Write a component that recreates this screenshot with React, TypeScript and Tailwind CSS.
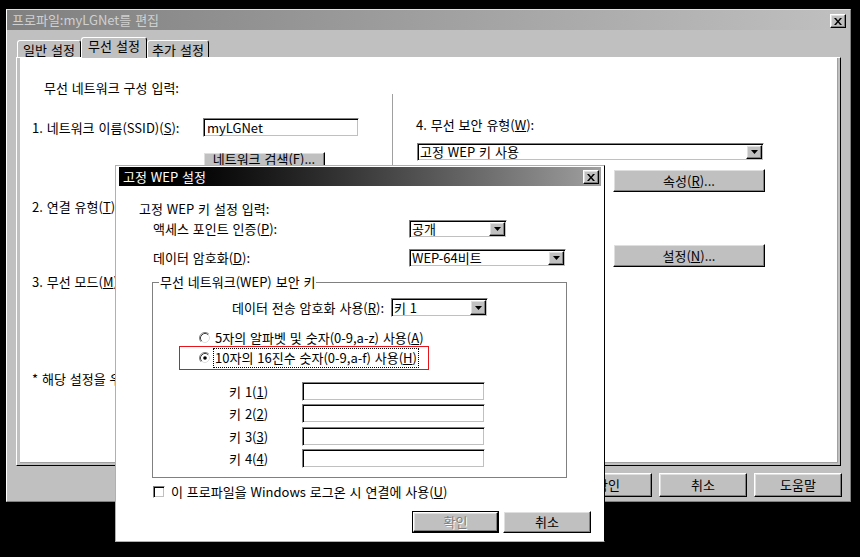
import React from 'react'

// win98-ish bevels
const raised =
  'bg-[#c0c0c0] border border-t-white border-l-white border-r-black border-b-black shadow-[inset_-1px_-1px_0_#808080,inset_1px_1px_0_#dfdfdf]'
const sunken =
  'bg-white border border-t-[#808080] border-l-[#808080] border-r-white border-b-white shadow-[inset_1px_1px_0_#000,inset_-1px_-1px_0_#c0c0c0]'

const U = ({ children }: { children: React.ReactNode }) => <span className="underline underline-offset-[1px]">{children}</span>

const Btn = ({ className = '', children }: { className?: string; children: React.ReactNode }) => (
  <div className={`${raised} flex items-center justify-center leading-[14px] ${className}`}>{children}</div>
)

const CloseBtn = ({ className = '' }: { className?: string }) => (
  <div className={`${raised} w-[16px] h-[14px] flex items-center justify-center ${className}`}>
    <svg width="8" height="7" viewBox="0 0 8 7">
      <path d="M0 0h2l2 2.5L6 0h2L5 3.5 8 7H6L4 4.5 2 7H0l3-3.5z" fill="#000" />
    </svg>
  </div>
)

const Select = ({ value, className = '' }: { value: string; className?: string }) => (
  <div className={`${sunken} flex items-stretch p-[1px] ${className}`}>
    <span className="flex-1 pl-[1px] leading-[14px] self-center">{value}</span>
    <div className={`${raised} w-[16px] flex items-center justify-center`}>
      <svg width="7" height="4" viewBox="0 0 7 4">
        <path d="M0 0h7L3.5 4z" fill="#000" />
      </svg>
    </div>
  </div>
)

const Radio = ({ checked = false }: { checked?: boolean }) => (
  <svg width="12" height="12" viewBox="0 0 12 12" className="shrink-0">
    <circle cx="6" cy="6" r="5" fill="#fff" />
    <path d="M9.89 2.11A5.5 5.5 0 0 0 2.11 9.89" stroke="#808080" fill="none" />
    <path d="M9.89 2.11A5.5 5.5 0 0 1 2.11 9.89" stroke="#fff" fill="none" />
    <path d="M9.18 2.82A4.5 4.5 0 0 0 2.82 9.18" stroke="#404040" fill="none" />
    <path d="M9.18 2.82A4.5 4.5 0 0 1 2.82 9.18" stroke="#dfdfdf" fill="none" />
    {checked && <circle cx="6" cy="6" r="1.8" fill="#000" />}
  </svg>
)

const Tab = ({ label, selected = false, className = '' }: { label: string; selected?: boolean; className?: string }) => (
  <div
    className={`bg-[#c0c0c0] border-t border-l border-r border-t-white border-l-white border-r-black rounded-t-[3px] flex justify-center leading-[14px] ${
      selected ? 'h-[21px] -mb-px relative z-10 pt-[1px]' : 'h-[17px] pt-[2px]'
    } ${className}`}
  >
    {label}
  </div>
)

const KeyRow = ({ n, className = '' }: { n: number; className?: string }) => (
  <div className={`flex items-center h-[19px] pl-[76px] ${className}`}>
    <div className="w-[73px] leading-[14px]">
      키 {n}(<U>{n}</U>)
    </div>
    <div className={`${sunken} w-[183px] h-[19px]`} />
  </div>
)

export default function App() {
  return (
    <div className="relative w-[860px] h-[557px] bg-black overflow-hidden whitespace-nowrap text-[13px] leading-[14px] [word-spacing:1px] text-black font-['Noto_Sans_CJK_KR',sans-serif]">
      {/* main window */}
      <div className="absolute left-[6px] top-[9px] w-[845px] h-[493px] bg-[#c0c0c0] border border-t-[#dfdfdf] border-l-white border-r-[#808080] border-b-[#808080] flex flex-col">
        <div className="h-[20px] flex justify-between bg-linear-to-r from-[#808080] to-[#c0c0c0] pl-[5px] pr-[4px]">
          <span className="self-center text-[#d0d0d0]">프로파일:myLGNet를 편집</span>
          <CloseBtn className="self-end mb-[2px]" />
        </div>

        <div className="flex items-end h-[20px] mt-[7px] pl-[10px]">
          <Tab label="일반 설정" className="w-[64px]" />
          <Tab label="무선 설정" selected className="w-[66px]" />
          <Tab label="추가 설정" className="w-[62px]" />
        </div>

        <div className="ml-[9px] w-[825px] h-[409px] border border-t-white border-l-white border-r-black border-b-black bg-[#c0c0c0] pl-[3px] pr-[2px] pb-[2px] flex">
          <div className="flex-1 bg-white border-r border-b border-r-[#a0a0a0] border-b-[#a0a0a0] flex">
            <div className="w-[372px] pl-[12px] pt-[23px]">
              <div className="ml-[12px]">무선 네트워크 구성 입력:</div>
              <div className="flex items-center mt-[23px] h-[19px]">
                <div className="w-[171px]">
                  1. 네트워크 이름(SSID)(<U>S</U>):
                </div>
                <div className={`${sunken} w-[156px] h-[19px] flex items-center pl-[3px]`}>myLGNet</div>
              </div>
              <Btn className="ml-[171px] mt-[15px] w-[122px] h-[23px]">
                <span className="relative -top-[5px]">
                  네트워크 검색(<U>F</U>)...
                </span>
              </Btn>
              <div className="mt-[25px]">
                2. 연결 유형(<U>T</U>):
              </div>
              <div className="mt-[61px]">
                3. 무선 모드(<U>M</U>):
              </div>
              <div className="mt-[83px]">* 해당 설정을 우선 적용합니다.</div>
            </div>

            <div className="w-px bg-[#a0a0a0] mt-[36px] h-[360px]" />

            <div className="flex-1 pl-[23px] pt-[60px]">
              <div>
                4. 무선 보안 유형(<U>W</U>):
              </div>
              <Select value="고정 WEP 키 사용" className="ml-[1px] mt-[11px] w-[347px] h-[18px]" />
              <Btn className="ml-[197px] mt-[8px] w-[152px] h-[23px]">
                속성(<U>R</U>)...
              </Btn>
              <Btn className="ml-[197px] mt-[52px] w-[152px] h-[23px]">
                설정(<U>N</U>)...
              </Btn>
            </div>
          </div>
        </div>

        <div className="flex justify-end gap-[7px] mt-[7px] pr-[8px]">
          <Btn className="w-[88px] h-[24px]">확인</Btn>
          <Btn className="w-[88px] h-[24px]">취소</Btn>
          <Btn className="w-[88px] h-[24px]">도움말</Btn>
        </div>
      </div>

      {/* WEP dialog */}
      <div className="absolute left-[115px] top-[165px] w-[490px] h-[377px] bg-white border border-[#b0b0b0] border-r-black pt-[1px] px-[3px]">
        <div className="h-[19px] flex justify-between bg-linear-to-r from-black to-[#a0a0a0] pl-[4px] pr-[2px]">
          <span className="self-center text-white">고정 WEP 설정</span>
          <CloseBtn className="self-end mb-[2px]" />
        </div>

        <div className="pl-[20px] pr-[10px]">
          <div className="mt-[16px]">고정 WEP 키 설정 입력:</div>
          <div className="flex items-center mt-[4px] ml-[14px]">
            <div className="w-[256px]">
              액세스 포인트 인증(<U>P</U>):
            </div>
            <Select value="공개" className="w-[98px] h-[18px]" />
          </div>
          <div className="flex items-center mt-[11px] ml-[14px]">
            <div className="w-[256px]">
              데이터 암호화(<U>D</U>):
            </div>
            <Select value="WEP-64비트" className="w-[157px] h-[18px]" />
          </div>

          <div className="relative mt-[15px] ml-[13px] w-[415px] h-[196px] border border-[#808080]">
            <span className="absolute left-[6px] top-[-8px] bg-white px-[1px]">무선 네트워크(WEP) 보안 키</span>
            <div className="flex items-center mt-[15px] ml-[79px]">
              <div className="w-[159px]">
                데이터 전송 암호화 사용(<U>R</U>):
              </div>
              <Select value="키 1" className="w-[97px] h-[19px]" />
            </div>
            <div className="flex items-center h-[14px] mt-[14px] ml-[46px] gap-[4px]">
              <Radio />
              <span>
                5자의 알파벳 및 숫자(0-9,a-z) 사용(<U>A</U>)
              </span>
            </div>
            <div className="flex items-center h-[14px] mt-[6px] ml-[46px] gap-[2px]">
              <Radio checked />
              <span className="border border-dotted border-black px-px py-[2px]">
                10자의 16진수 숫자(0-9,a-f) 사용(<U>H</U>)
              </span>
            </div>
            <KeyRow n={1} className="mt-[17px]" />
            <KeyRow n={2} className="mt-[3px]" />
            <KeyRow n={3} className="mt-[4px]" />
            <KeyRow n={4} className="mt-[3px]" />
          </div>

          <div className="flex items-center h-[14px] mt-[7px] ml-[14px] gap-[6px]">
            <div className={`${sunken} w-[12px] h-[12px]`} />
            <span>
              이 프로파일을 Windows 로그온 시 연결에 사용(<U>U</U>)
            </span>
          </div>

          <div className="flex justify-end gap-[4px] mt-[12px]">
            <div className="border border-black w-[87px] h-[22px] flex">
              <Btn className="flex-1 text-[#808080] [text-shadow:1px_1px_0_#fff]">확인</Btn>
            </div>
            <Btn className="w-[88px] h-[22px]">취소</Btn>
          </div>
        </div>

        {/* red highlight annotation */}
        <div className="absolute left-[63px] top-[180px] w-[250px] h-[24px] border border-[#e8141c]" />
      </div>
    </div>
  )
}
